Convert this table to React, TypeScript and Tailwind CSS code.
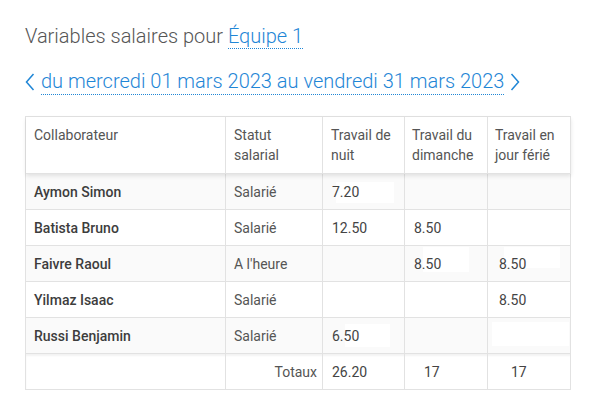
import * as React from 'react';

type Row = {
  name: string;
  status: string;
  night: string;
  sunday: string;
  holiday: string;
  striped: boolean;
  patches?: { left: number; top: number; width: number; height: number; col: number }[];
};

const rows: Row[] = [
  {
    name: 'Aymon Simon',
    status: 'Salarié',
    night: '7.20',
    sunday: '',
    holiday: '',
    striped: true,
    patches: [{ col: 2, left: 13, top: 8, width: 58, height: 21 }],
  },
  { name: 'Batista Bruno', status: 'Salarié', night: '12.50', sunday: '8.50', holiday: '', striped: false },
  {
    name: 'Faivre Raoul',
    status: "A l'heure",
    night: '',
    sunday: '8.50',
    holiday: '8.50',
    striped: true,
    patches: [
      { col: 3, left: 18, top: 1, width: 46, height: 25 },
      { col: 4, left: 16, top: 1, width: 56, height: 21 },
    ],
  },
  { name: 'Yilmaz Isaac', status: 'Salarié', night: '', sunday: '', holiday: '8.50', striped: false },
  {
    name: 'Russi Benjamin',
    status: 'Salarié',
    night: '6.50',
    sunday: '',
    holiday: '',
    striped: true,
    patches: [
      { col: 2, left: 22, top: 6, width: 45, height: 23 },
      { col: 4, left: 4, top: 4, width: 77, height: 24 },
    ],
  },
];

const cols = 'grid grid-cols-[200px_97px_82px_83px_83px]';
const cell = 'relative border-r border-b border-[#e2e2e2]';

function Chevron({ dir }: { dir: 'left' | 'right' }) {
  return (
    <svg width="10" height="18" viewBox="0 0 10 18" className="shrink-0">
      <path
        d={dir === 'left' ? 'M8.5 1 L1.5 9 L8.5 17' : 'M1.5 1 L8.5 9 L1.5 17'}
        fill="none"
        stroke="#1f86d6"
        strokeWidth="1.5"
      />
    </svg>
  );
}

function Value({ row, col, children, className }: { row: Row; col: number; children?: React.ReactNode; className?: string }) {
  const patches = (row.patches || []).filter((p) => p.col === col);
  return (
    <div className={`${cell} flex items-center ${className || ''}`}>
      {patches.map((p, i) => (
        <div
          key={i}
          className="absolute bg-white"
          style={{ left: p.left, top: p.top, width: p.width, height: p.height }}
        />
      ))}
      <span className="relative">{children}</span>
    </div>
  );
}

export default function App() {
  return (
    <div className="min-h-[413px] bg-white font-['Roboto',sans-serif] text-[#555]">
      <div className="px-[25px] pt-[23px]">
        <h1 className="text-[20px] font-light leading-[26px] text-[#555]">
          Variables salaires pour{' '}
          <span className="border-b border-dotted border-[#1f86d6] text-[#1f86d6]">Équipe 1</span>
        </h1>
        <div className="mt-[19px] flex items-center gap-[6px] text-[20px] font-light leading-[26px] text-[#1f86d6]">
          <Chevron dir="left" />
          <span className="border-b border-dotted border-[#1f86d6]">
            du mercredi 01 mars 2023 au vendredi 31 mars 2023
          </span>
          <Chevron dir="right" />
        </div>
      </div>

      <div className="ml-[25px] mt-[21px] w-[546px] border-l border-t border-[#e2e2e2] text-[14px] leading-[20px]">
        <div className={`${cols} relative z-10 h-[57px] bg-white shadow-[0_2px_4px_rgba(0,0,0,0.10)]`}>
          <div className={`${cell} px-[8px] pt-[8px]`}>Collaborateur</div>
          <div className={`${cell} px-[8px] pt-[8px]`}>Statut<br />salarial</div>
          <div className={`${cell} px-[8px] pt-[8px]`}>Travail de<br />nuit</div>
          <div className={`${cell} px-[7px] pt-[8px]`}>Travail du<br />dimanche</div>
          <div className={`${cell} px-[7px] pt-[8px]`}>Travail en<br />jour férié</div>
        </div>
        {rows.map((r) => (
          <div key={r.name} className={`${cols} h-[36px] ${r.striped ? 'bg-[#fafafa]' : 'bg-white'}`}>
            <div className={`${cell} flex items-center px-[8px] font-medium text-[#3d3d3d]`}>{r.name}</div>
            <div className={`${cell} flex items-center px-[8px] text-[#555]`}>{r.status}</div>
            <Value row={r} col={2} className="pl-[9px] text-[#444]">{r.night}</Value>
            <Value row={r} col={3} className="pl-[9px] text-[#444]">{r.sunday}</Value>
            <Value row={r} col={4} className="pl-[11px] text-[#444]">{r.holiday}</Value>
          </div>
        ))}
        <div className={`${cols} h-[36px] bg-white shadow-[inset_0_2px_2px_rgba(0,0,0,0.05)]`}>
          <div className={cell} />
          <div className={`${cell} flex items-center justify-end pr-[5px] text-[#555]`}>Totaux</div>
          <div className={`${cell} flex items-center pl-[9px] text-[#444]`}>26.20</div>
          <div className={`${cell} flex items-center pl-[19px] text-[#444]`}>17</div>
          <div className={`${cell} flex items-center pl-[23px] text-[#444]`}>17</div>
        </div>
      </div>
    </div>
  );
}
